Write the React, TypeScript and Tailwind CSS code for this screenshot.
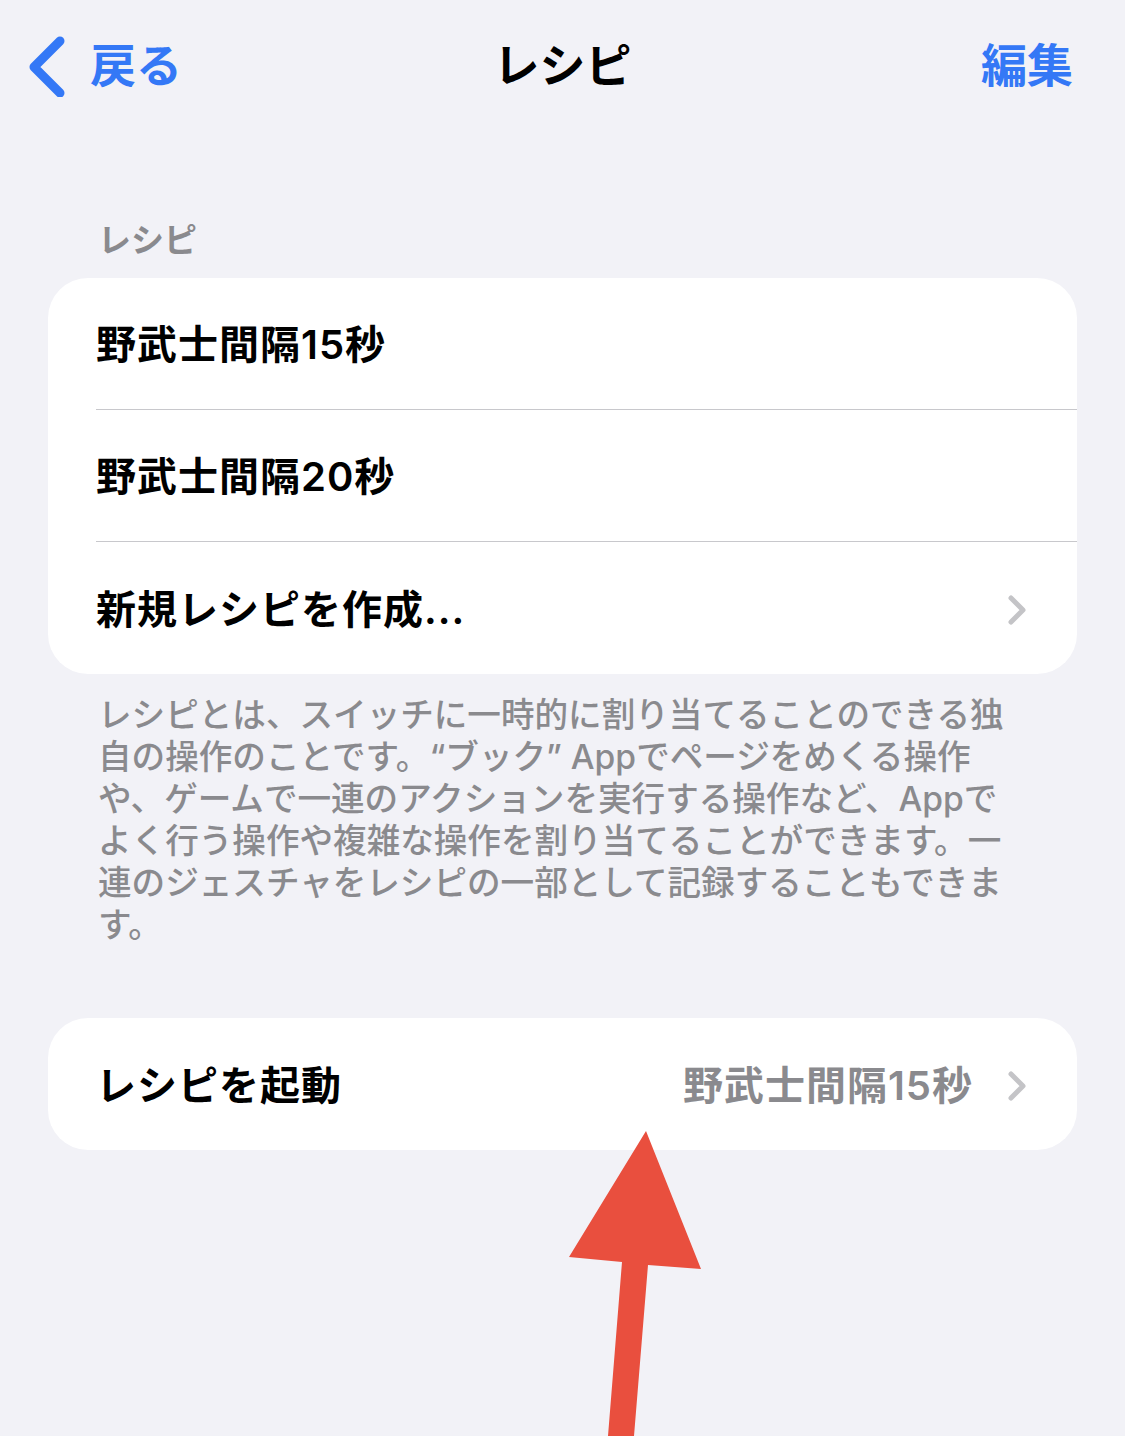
const FONT = "font-['Inter','Noto_Sans_CJK_JP',sans-serif]"

function Chevron() {
  return (
    <svg width="24" height="32" viewBox="0 0 24 32" className="shrink-0">
      <path d="M4 4 L16 16 L4 28" fill="none" stroke="#c4c4c7" strokeWidth="5" strokeLinecap="round" strokeLinejoin="round" />
    </svg>
  )
}

function Row({ label, value, chevron, divider }: { label: string; value?: string; chevron?: boolean; divider?: boolean }) {
  return (
    <div className="flex h-[132px] items-stretch pl-[48px]">
      <div className={`flex flex-1 items-center pt-[4px] pr-[46px] ${divider ? 'border-b border-[#c8c8cc]' : ''}`}>
        <span className="flex-1 text-[40px] font-semibold tracking-[1px] text-black">{label}</span>
        {value && <span className="mr-[34px] text-[40px] font-semibold tracking-[1px] text-[#8a8a8e]">{value}</span>}
        {chevron && <Chevron />}
      </div>
    </div>
  )
}

const FOOTER = [
  'レシピとは、スイッチに一時的に割り当てることのできる独',
  '自の操作のことです。“ブック” Appでページをめくる操作',
  'や、ゲームで一連のアクションを実行する操作など、Appで',
  'よく行う操作や複雑な操作を割り当てることができます。一',
  '連のジェスチャをレシピの一部として記録することもできま',
  'す。',
]

export default function App() {
  return (
    <div className={`relative h-[1436px] w-[1125px] overflow-hidden bg-[#f2f2f7] ${FONT}`}>
      {/* nav bar */}
      <div className="grid h-[132px] grid-cols-[1fr_auto_1fr] items-center px-[24px] pb-[2px]">
        <div className="flex items-center text-[#3478f6]">
          <svg width="48" height="64" viewBox="0 0 48 64">
            <path d="M36 8 L10 34 L36 60" fill="none" stroke="#3478f6" strokeWidth="9" strokeLinecap="round" strokeLinejoin="round" />
          </svg>
          <span className="ml-[18px] text-[46px] font-semibold">戻る</span>
        </div>
        <h1 className="text-[46px] font-bold text-black">レシピ</h1>
        <div className="flex justify-end pr-[28px]">
          <span className="text-[46px] font-semibold text-[#3478f6]">編集</span>
        </div>
      </div>

      <div className="px-[48px]">
        <div className="mt-[84px] pl-[50px] text-[33px] font-semibold text-[#8a8a8e]">レシピ</div>
        <div className="mt-[12px] overflow-hidden rounded-[40px] bg-white">
          <Row label="野武士間隔15秒" divider />
          <Row label="野武士間隔20秒" divider />
          <Row label="新規レシピを作成..." chevron />
        </div>
        <p className="mt-[20px] px-[50px] text-[33.6px] font-medium leading-[42px] text-[#8a8a8e]">
          {FOOTER.map((line) => (
            <span key={line} className="block whitespace-nowrap">
              {line}
            </span>
          ))}
        </p>
        <div className="mt-[72px] overflow-hidden rounded-[40px] bg-white">
          <Row label="レシピを起動" value="野武士間隔15秒" chevron />
        </div>
      </div>

      {/* annotation arrow */}
      <svg className="absolute left-0 top-0" width="1125" height="1436" viewBox="0 0 1125 1436">
        <polygon points="646,1131 701,1269 648,1265 634,1436 608,1436 622,1262 569,1257" fill="#e94f3e" />
      </svg>
    </div>
  )
}
